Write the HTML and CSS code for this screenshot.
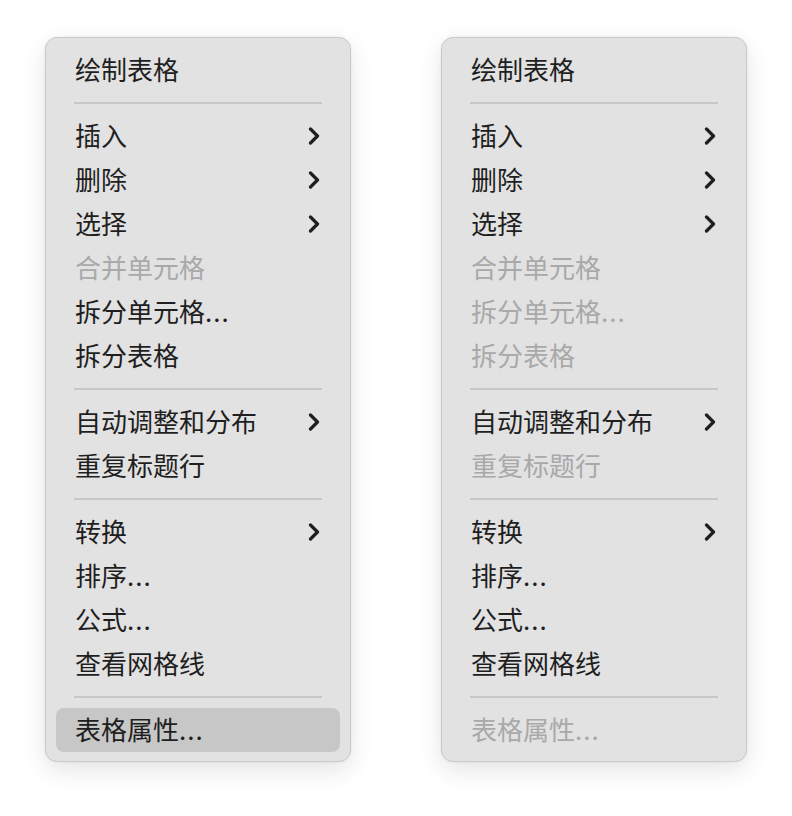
FILE: index.html
```html
<!DOCTYPE html>
<html lang="zh-CN">
<head>
<meta charset="utf-8">
<title>表格菜单</title>
<link rel="stylesheet" href="styles.css">
</head>
<body>
<div class="stage">
  <div class="menu">
    <div class="item">绘制表格</div>
    <div class="sep"></div>
    <div class="item sub">插入<svg class="chev" viewBox="0 0 12 18"><path d="M2.5 2 L9.5 9 L2.5 16"/></svg></div>
    <div class="item sub">删除<svg class="chev" viewBox="0 0 12 18"><path d="M2.5 2 L9.5 9 L2.5 16"/></svg></div>
    <div class="item sub">选择<svg class="chev" viewBox="0 0 12 18"><path d="M2.5 2 L9.5 9 L2.5 16"/></svg></div>
    <div class="item off">合并单元格</div>
    <div class="item">拆分单元格<span class="dots">...</span></div>
    <div class="item">拆分表格</div>
    <div class="sep"></div>
    <div class="item sub">自动调整和分布<svg class="chev" viewBox="0 0 12 18"><path d="M2.5 2 L9.5 9 L2.5 16"/></svg></div>
    <div class="item">重复标题行</div>
    <div class="sep"></div>
    <div class="item sub">转换<svg class="chev" viewBox="0 0 12 18"><path d="M2.5 2 L9.5 9 L2.5 16"/></svg></div>
    <div class="item">排序<span class="dots">...</span></div>
    <div class="item">公式<span class="dots">...</span></div>
    <div class="item">查看网格线</div>
    <div class="sep"></div>
    <div class="item hl">表格属性<span class="dots">...</span></div>
  </div>
  <div class="menu">
    <div class="item">绘制表格</div>
    <div class="sep"></div>
    <div class="item sub">插入<svg class="chev" viewBox="0 0 12 18"><path d="M2.5 2 L9.5 9 L2.5 16"/></svg></div>
    <div class="item sub">删除<svg class="chev" viewBox="0 0 12 18"><path d="M2.5 2 L9.5 9 L2.5 16"/></svg></div>
    <div class="item sub">选择<svg class="chev" viewBox="0 0 12 18"><path d="M2.5 2 L9.5 9 L2.5 16"/></svg></div>
    <div class="item off">合并单元格</div>
    <div class="item off">拆分单元格<span class="dots">...</span></div>
    <div class="item off">拆分表格</div>
    <div class="sep"></div>
    <div class="item sub">自动调整和分布<svg class="chev" viewBox="0 0 12 18"><path d="M2.5 2 L9.5 9 L2.5 16"/></svg></div>
    <div class="item off">重复标题行</div>
    <div class="sep"></div>
    <div class="item sub">转换<svg class="chev" viewBox="0 0 12 18"><path d="M2.5 2 L9.5 9 L2.5 16"/></svg></div>
    <div class="item">排序<span class="dots">...</span></div>
    <div class="item">公式<span class="dots">...</span></div>
    <div class="item">查看网格线</div>
    <div class="sep"></div>
    <div class="item off">表格属性<span class="dots">...</span></div>
  </div>
</div>
</body>
</html>
```
FILE: styles.css
```css
* { box-sizing: border-box; }
html, body { margin: 0; background: #ffffff; }
body {
  font-family: "Noto Sans CJK SC", "Noto Sans", sans-serif;
  width: 792px;
  height: 816px;
  overflow: hidden;
}
.stage {
  display: flex;
  gap: 90px;
  padding: 37px 0 0 45px;
}
.menu {
  width: 306px;
  background: #e2e2e2;
  border: 1px solid #c9c9c9;
  border-radius: 12px;
  padding: 10px 10px 9px;
  box-shadow: 0 8px 24px rgba(0,0,0,0.11), 0 0 3px rgba(0,0,0,0.06);
}
.item {
  height: 44px;
  display: flex;
  align-items: center;
  padding: 0 20px 3px 19px;
  font-size: 26px;
  color: #1f1f1f;
  border-radius: 8px;
  line-height: 1;
}
.item.off { color: #a9a9a9; }
.item.hl { background: #c7c7c7; }
.dots { letter-spacing: 1px; }
.sub { justify-content: space-between; }
.chev {
  width: 12px;
  height: 18px;
  margin-top: 3px;
  fill: none;
  stroke: #1f1f1f;
  stroke-width: 3.2;
  stroke-linecap: round;
  stroke-linejoin: round;
}
.sep {
  height: 22px;
  margin: 0 18px;
  display: flex;
  align-items: center;
}
.sep::before {
  content: "";
  display: block;
  width: 100%;
  height: 2px;
  background: #c8c8c8;
}
```
